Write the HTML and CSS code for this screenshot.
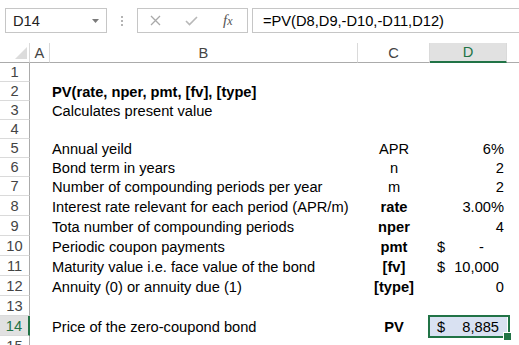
FILE: index.html
```html
<!DOCTYPE html>
<html>
<head>
<meta charset="utf-8">
<link rel="stylesheet" href="styles.css">
</head>
<body>
<div class="toolbar">
  <div class="namebox"><span>D14</span><svg class="caret" width="7" height="4" viewBox="0 0 7 4"><polygon points="0,0 7,0 3.5,4" fill="#7a7a7a"/></svg></div>
  <div class="dots"><i></i><i></i><i></i></div>
  <div class="fbtns">
    <svg class="ico-x" width="11" height="11" viewBox="0 0 11 11"><path d="M1 1 L10 10 M10 1 L1 10" stroke="#a9a9a9" stroke-width="1.3" fill="none"/></svg>
    <svg class="ico-ok" width="13" height="10" viewBox="0 0 13 10"><path d="M1 5 L4.5 8.5 L12 1" stroke="#b8b8b8" stroke-width="1.6" fill="none"/></svg>
    <span class="fx">f<span class="fxx">x</span></span>
  </div>
  <div class="formula">=PV(D8,D9,-D10,-D11,D12)</div>
</div>
<div class="sheet">
  <div class="row head">
    <div class="hc corner"><svg width="12" height="12" viewBox="0 0 12 12"><polygon points="12,0 12,12 0,12" fill="#dcdcdc"/></svg></div>
    <div class="hc">A</div>
    <div class="hc">B</div>
    <div class="hc">C</div>
    <div class="hc sel">D</div>
    <div class="hc last"></div>
  </div>
  <div class="row"><div class="rh">1</div><div></div><div class="cell b"></div><div class="cell c"></div><div class="cell d"></div><div></div></div>
  <div class="row"><div class="rh">2</div><div></div><div class="cell b bold">PV(rate, nper, pmt, [fv], [type]</div><div class="cell c"></div><div class="cell d"></div><div></div></div>
  <div class="row"><div class="rh">3</div><div></div><div class="cell b">Calculates present value</div><div class="cell c"></div><div class="cell d"></div><div></div></div>
  <div class="row"><div class="rh">4</div><div></div><div class="cell b"></div><div class="cell c"></div><div class="cell d"></div><div></div></div>
  <div class="row"><div class="rh">5</div><div></div><div class="cell b">Annual yeild</div><div class="cell c">APR</div><div class="cell d">6%</div><div></div></div>
  <div class="row"><div class="rh">6</div><div></div><div class="cell b">Bond term in years</div><div class="cell c">n</div><div class="cell d">2</div><div></div></div>
  <div class="row"><div class="rh">7</div><div></div><div class="cell b">Number of compounding periods per year</div><div class="cell c">m</div><div class="cell d">2</div><div></div></div>
  <div class="row t"><div class="rh">8</div><div></div><div class="cell b">Interest rate relevant for each period (APR/m)</div><div class="cell c bold">rate</div><div class="cell d">3.00%</div><div></div></div>
  <div class="row t"><div class="rh">9</div><div></div><div class="cell b">Tota number of compounding periods</div><div class="cell c bold">nper</div><div class="cell d">4</div><div></div></div>
  <div class="row t"><div class="rh">10</div><div></div><div class="cell b">Periodic coupon payments</div><div class="cell c bold">pmt</div><div class="cell d acct"><span>$</span><span class="dash">-</span></div><div></div></div>
  <div class="row t"><div class="rh">11</div><div></div><div class="cell b">Maturity value i.e. face value of the bond</div><div class="cell c bold">[fv]</div><div class="cell d acct"><span>$</span><span>10,000</span></div><div></div></div>
  <div class="row t"><div class="rh">12</div><div></div><div class="cell b">Annuity (0) or annuity due (1)</div><div class="cell c bold">[type]</div><div class="cell d">0</div><div></div></div>
  <div class="row t"><div class="rh">13</div><div></div><div class="cell b"></div><div class="cell c"></div><div class="cell d"></div><div></div></div>
  <div class="row t"><div class="rh sel">14</div><div></div><div class="cell b">Price of the zero-coupond bond</div><div class="cell c bold">PV</div><div class="cell d acct active"><span>$</span><span>8,885</span></div><div></div></div>
  <div class="row t"><div class="rh">15</div><div></div><div class="cell b"></div><div class="cell c"></div><div class="cell d"></div><div></div></div>
</div>
</body>
</html>
```

FILE: styles.css
```css
* { box-sizing: border-box; }
html, body { margin: 0; padding: 0; background: #fff; overflow: hidden; }
body {
  width: 519px;
  height: 345px;
  font-family: "Liberation Sans", Arial, sans-serif;
  font-size: 14.67px;
  color: #000;
}

.toolbar {
  height: 43px;
  display: flex;
  align-items: flex-start;
  padding-top: 8px;
}
.namebox {
  margin-left: 5px;
  width: 102px;
  height: 25px;
  border: 1px solid #c6c6c6;
  display: flex;
  align-items: center;
  padding-left: 7px;
  padding-right: 7px;
  color: #222;
}
.namebox .caret { margin-left: auto; }
.dots {
  width: 30px;
  height: 25px;
  display: flex;
  flex-direction: column;
  align-items: center;
  justify-content: center;
  gap: 2px;
}
.dots i { display: block; width: 2px; height: 2px; background: #b4b4b4; }
.fbtns {
  width: 111px;
  height: 25px;
  border: 1px solid #c6c6c6;
  display: flex;
  align-items: center;
  padding-left: 12px;
}
.ico-ok { margin-left: 24px; }
.fx {
  margin-left: 25px;
  font-family: "Liberation Serif", "Times New Roman", serif;
  font-style: italic;
  font-size: 15px;
  color: #555;
}
.fxx { font-size: 12px; }
.formula {
  margin-left: 4px;
  flex: 1;
  height: 25px;
  border: 1px solid #c6c6c6;
  border-right: none;
  display: flex;
  align-items: center;
  padding-left: 10px;
  white-space: nowrap;
}

.row {
  display: grid;
  grid-template-columns: 30px 20px 308px 72px 77px 1fr;
  height: 19px;
}
.row.t { height: 20px; }
.row.head { height: 20px; }

.hc {
  display: flex;
  align-items: center;
  justify-content: center;
  color: #444;
  border-right: 1px solid #dadada;
  border-bottom: 1px solid #ababab;
}
.hc.corner { align-items: flex-end; justify-content: flex-end; padding: 0 2px 3px 0; border-right-color: #dadada; }
.hc.last { border-right: none; }
.hc.sel {
  background: #e1e1e1;
  color: #217346;
  border-bottom: 2px solid #217346;
}

.rh {
  display: flex;
  align-items: center;
  justify-content: center;
  color: #444;
  border-right: 1px solid #ababab;
  border-bottom: 1px solid #dadada;
}
.rh.sel {
  background: #e1e1e1;
  color: #217346;
  border-right: 2px solid #217346;
}

.cell {
  display: flex;
  align-items: flex-end;
  line-height: 17px;
  white-space: nowrap;
  position: relative;
}
.b { padding-left: 2px; }
.c { justify-content: center; }
.d { justify-content: flex-end; padding-right: 3px; }
.d.acct { justify-content: space-between; padding-left: 7px; padding-right: 8px; }
.dash { margin-right: 15px; }
.bold { font-weight: bold; }

.active { background: #d9e1f2; }
.active::before {
  content: "";
  position: absolute;
  left: -2px;
  top: -1px;
  right: -3px;
  bottom: -2px;
  border: 2px solid #217346;
}
.active::after {
  content: "";
  position: absolute;
  left: 73px;
  top: 16px;
  width: 7px;
  height: 7px;
  background: #217346;
  border: 1px solid #fff;
}
```
